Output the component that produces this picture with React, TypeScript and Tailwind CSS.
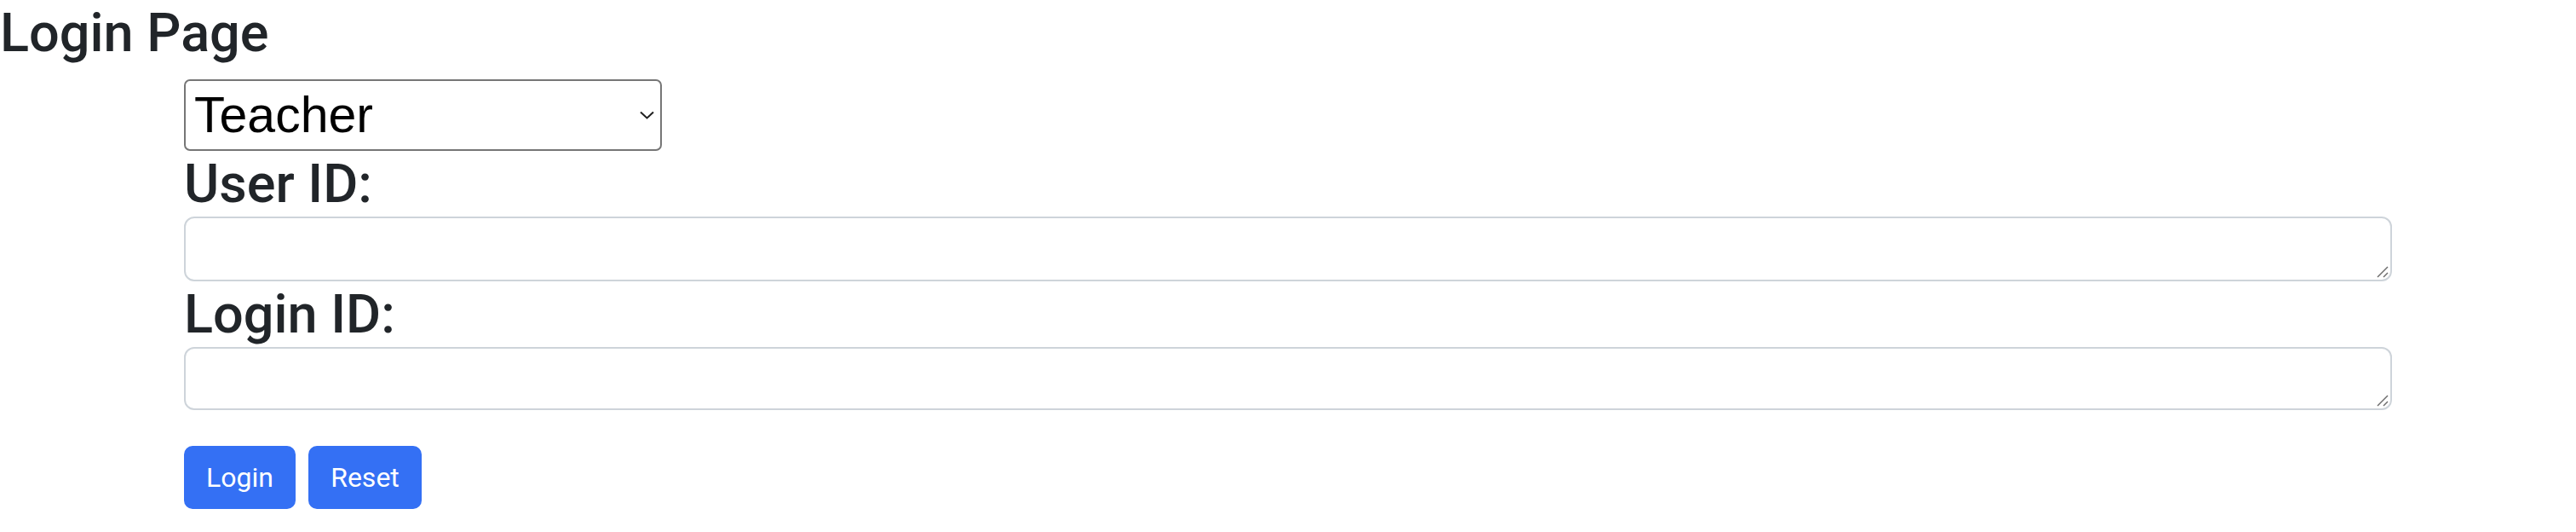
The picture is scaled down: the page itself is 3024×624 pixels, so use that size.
import { useState } from "react";

function Grip() {
    return (
        <svg
            className="absolute right-[4px] bottom-[4px] pointer-events-none"
            width="14"
            height="14"
            viewBox="0 0 14 14"
            fill="none"
            stroke="#6b6b6b"
            strokeWidth="1.5"
        >
            <path d="M1 13 L13 1" />
            <path d="M8 13 L13 8" />
        </svg>
    );
}

export default function App() {
    const [role, setRole] = useState("Teacher");
    const [userId, setUserId] = useState("");
    const [loginId, setLoginId] = useState("");

    const reset = () => {
        setRole("Teacher");
        setUserId("");
        setLoginId("");
    };

    return (
        <div className="w-full h-[624px] bg-white text-[#212529] font-['Roboto','Liberation_Sans',Arial,sans-serif]">
            <h2 className="text-[63px] leading-[77px] font-medium mb-4">Login Page</h2>

            <div className="px-[216px] flex flex-col">
                {/* role picker */}
                <div className="relative w-[561px] h-[84px]">
                    <select
                        value={role}
                        onChange={(e) => setRole(e.target.value)}
                        className="appearance-none w-full h-full pl-[10px] pr-[40px] border-2 border-[#767676] rounded-[7px] bg-white text-black text-[59px] leading-none font-['Liberation_Sans',Arial,sans-serif] outline-none"
                    >
                        <option>Teacher</option>
                        <option>Student</option>
                    </select>
                    <svg
                        className="absolute right-[9px] top-[37px] pointer-events-none"
                        width="17"
                        height="10"
                        viewBox="0 0 17 10"
                        fill="none"
                        stroke="#1f1f1f"
                        strokeWidth="2"
                    >
                        <path d="M1 1.5 L8.5 8.5 L16 1.5" />
                    </svg>
                </div>

                <label className="text-[63px] leading-[77px] font-medium">User ID:</label>
                <div className="relative">
                    <textarea
                        value={userId}
                        onChange={(e) => setUserId(e.target.value)}
                        className="block w-full h-[76px] resize-none border-2 border-[#ced4da] rounded-[12px] px-6 py-3 text-[32px] outline-none"
                    />
                    <Grip />
                </div>

                <label className="text-[63px] leading-[77px] font-medium">Login ID:</label>
                <div className="relative">
                    <textarea
                        value={loginId}
                        onChange={(e) => setLoginId(e.target.value)}
                        className="block w-full h-[74px] resize-none border-2 border-[#ced4da] rounded-[12px] px-6 py-3 text-[32px] outline-none"
                    />
                    <Grip />
                </div>

                <div className="mt-[42px] flex gap-[15px]">
                    <button className="w-[131px] h-[74px] rounded-[10px] bg-[#3470f4] text-white text-[32px]">
                        Login
                    </button>
                    <button
                        onClick={reset}
                        className="w-[133px] h-[74px] rounded-[10px] bg-[#3470f4] text-white text-[32px]"
                    >
                        Reset
                    </button>
                </div>
            </div>
        </div>
    );
}
